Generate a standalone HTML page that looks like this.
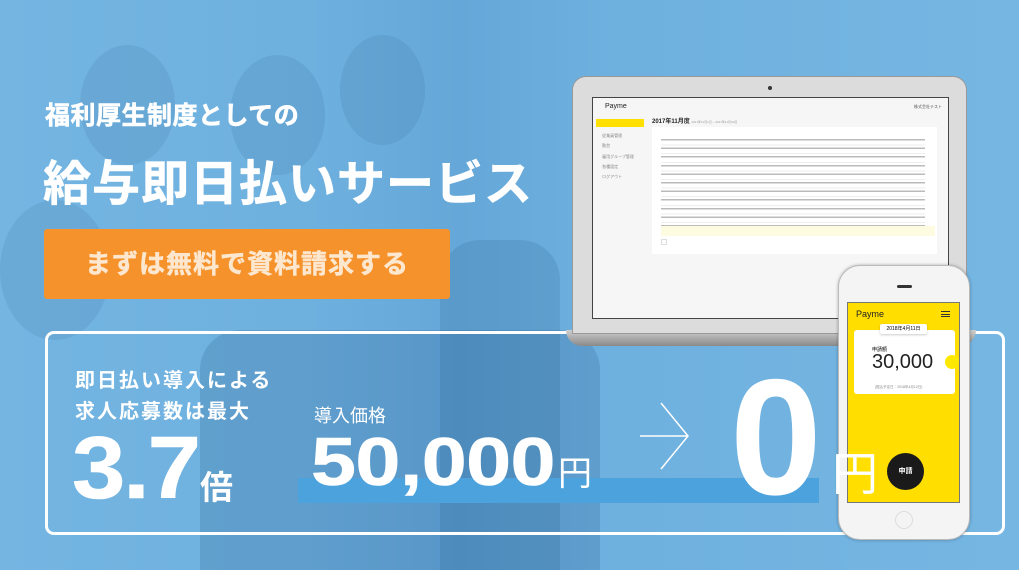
<!DOCTYPE html>
<html><head><meta charset="utf-8">
<style>
*{margin:0;padding:0;box-sizing:border-box}
body{width:1019px;height:562px;overflow:hidden;position:relative;font-family:"Liberation Sans","Noto Sans CJK JP",sans-serif;
background:linear-gradient(90deg,#74b5e2 0%,#6eb0de 30%,#65a7d8 45%,#6eb0de 60%,#76b6e3 100%);}
.abs{position:absolute}
.w{color:#fff;font-weight:bold}
.head{position:absolute;border-radius:50%;background:rgba(40,90,140,0.12)}
.body{position:absolute;background:rgba(40,90,140,0.12);border-radius:40px 40px 0 0}
.st{-webkit-text-stroke:0.6px #fff}
</style></head><body>
<div class="head" style="left:80px;top:45px;width:95px;height:120px"></div>
<div class="head" style="left:230px;top:55px;width:95px;height:120px"></div>
<div class="head" style="left:340px;top:35px;width:85px;height:110px"></div>
<div class="head" style="left:0px;top:200px;width:110px;height:140px"></div>
<div class="body" style="left:200px;top:330px;width:400px;height:240px;background:rgba(30,80,130,0.18)"></div>
<div class="body" style="left:440px;top:240px;width:120px;height:330px;background:rgba(30,80,130,0.15)"></div>

<div class="abs w st" style="left:45px;top:96px;font-size:25px;letter-spacing:0.5px">福利厚生制度としての</div>
<div class="abs w st" style="left:43px;top:144px;font-size:48px;letter-spacing:1px">給与即日払いサービス</div>
<div class="abs" style="left:44px;top:229px;width:406px;height:70px;background:#f6922b;border-radius:3px;color:#fde7cf;font-weight:bold;font-size:26px;text-align:center;line-height:70px;letter-spacing:1px;-webkit-text-stroke:0.5px #fde7cf">まずは無料で資料請求する</div>

<div class="abs" style="left:45px;top:331px;width:960px;height:204px;border:3px solid #fff;border-radius:9px"></div>
<div class="abs" style="left:298px;top:478px;width:521px;height:25px;background:#4ba2dd"></div>
<div class="abs w" style="left:75px;top:366px;font-size:20px;letter-spacing:2px;line-height:31px">即日払い導入による<br>求人応募数は最大</div>
<div class="abs w st" style="left:72px;top:418px;font-size:88px;line-height:100px;letter-spacing:-2px;transform:scaleX(1.09);transform-origin:0 0">3.7</div>
<div class="abs w" style="left:200px;top:470px;font-size:33px;line-height:36px">倍</div>
<div class="abs" style="left:314px;top:405px;font-size:18px;color:#fff;line-height:22px">導入価格</div>
<div class="abs w st" style="left:311px;top:428px;font-size:68px;line-height:68px;letter-spacing:-0.5px;transform:scaleX(1.19);transform-origin:0 0">50,000</div>
<div class="abs" style="left:558px;top:456px;font-size:34px;line-height:36px;color:#fff">円</div>
<svg class="abs" style="left:640px;top:400px" width="52" height="70"><path d="M0 36H48M21 3L48 36L21 69" stroke="#fff" stroke-width="1.5" fill="none"/></svg>
<div class="abs w" style="left:730px;top:352px;font-size:165px;line-height:170px">0</div>

<div class="abs" style="left:566px;top:330px;width:410px;height:16px;background:linear-gradient(#cfcfcf,#8a8a8a);border-radius:0 0 40px 40px"></div>
<div class="abs" style="left:572px;top:76px;width:395px;height:258px;background:#dcdcdc;border:1px solid #999;border-radius:14px 14px 0 0"></div>
<div class="abs" style="left:768px;top:86px;width:4px;height:4px;background:#333;border-radius:50%"></div>
<div class="abs" style="left:592px;top:97px;width:357px;height:222px;background:#f6f6f6;border:1px solid #444;font-size:4px;color:#555">
 <div class="abs" style="left:12px;top:5px;font-size:7px;color:#222">Payme</div>
 <div class="abs" style="right:6px;top:6px">株式会社テスト</div>
 <div class="abs" style="left:3px;top:21px;width:48px;height:8px;background:#ffe000"></div>
 <div class="abs" style="left:8px;top:33px;line-height:10.3px;color:#888">&nbsp;従業員管理<br>&nbsp;勤怠<br>&nbsp;雇用グループ管理<br>&nbsp;各種設定<br>&nbsp;ログアウト</div>
 <div class="abs" style="left:59px;top:18px;font-size:6px;color:#222;font-weight:bold">2017年11月度 <span style="font-weight:normal;font-size:3px;color:#999">2017年11月1日 ~ 2017年11月30日</span></div>
 <div class="abs" style="left:59px;top:29px;width:285px;height:127px;background:#fff">
  <div class="abs" style="left:9px;top:10px;width:264px;height:90px;background:repeating-linear-gradient(#fff 0 2px,#bbb 2px 3.5px,#fff 3.5px 7.6px,#eee 7.6px 8.6px)"></div>
  <div class="abs" style="left:9px;top:99px;width:274px;height:10px;background:#fdfbe0"></div>
  <div class="abs" style="left:9px;top:112px;width:6px;height:6px;border:1px solid #ddd"></div>
 </div>
</div>
<div class="abs" style="left:838px;top:265px;width:132px;height:275px;background:#f4f4f4;border:1px solid #bbb;border-radius:22px;box-shadow:0 0 3px rgba(0,0,0,.3)"></div>
<div class="abs" style="left:897px;top:285px;width:15px;height:3px;background:#333;border-radius:2px"></div>
<div class="abs" style="left:847px;top:302px;width:113px;height:201px;background:#ffde00;border:1px solid #777">
 <div class="abs" style="left:8px;top:6px;font-size:9px;color:#222">Payme</div>
 <div class="abs" style="left:93px;top:8px;width:9px;height:6px;border-top:1.5px solid #333;border-bottom:1.5px solid #333"></div>
 <div class="abs" style="left:93px;top:10.5px;width:9px;height:1.5px;background:#333"></div>
 <div class="abs" style="left:6px;top:27px;width:101px;height:64px;background:#fff;border-radius:3px"></div>
 <div class="abs" style="left:32px;top:21px;width:47px;height:10px;background:#fff;border-radius:2px;font-size:5px;text-align:center;line-height:10px;box-shadow:0 1px 2px rgba(0,0,0,.2)">2018年4月11日</div>
 <div class="abs" style="left:24px;top:43px;font-size:5px">申請額</div>
 <div class="abs" style="left:24px;top:48px;font-size:20px;color:#222">30,000</div>
 <div class="abs" style="left:97px;top:52px;width:14px;height:14px;background:#ffe800;border-radius:50%"></div>
 <div class="abs" style="left:27px;top:82px;font-size:3.5px;color:#888">(振込予定日：2018年4月12日)</div>
 <div class="abs" style="left:39px;top:150px;width:37px;height:37px;background:#1a1a1a;border-radius:50%;color:#fff;font-size:7px;font-weight:bold;text-align:center;line-height:37px">申請</div>
</div>
<div class="abs" style="left:895px;top:511px;width:18px;height:18px;border:1px solid #ddd;border-radius:50%"></div>
<div class="abs" style="left:832px;top:450px;font-size:46px;line-height:48px;color:#fff">円</div>
</body></html>
